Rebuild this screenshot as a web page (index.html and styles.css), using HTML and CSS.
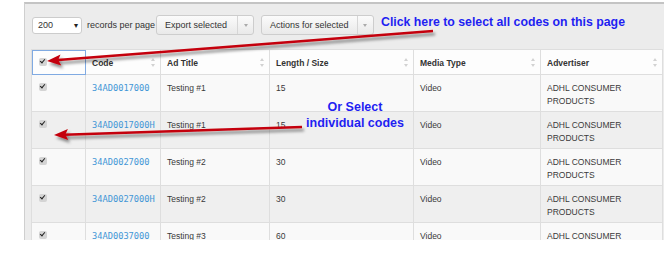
FILE: index.html
```html
<!DOCTYPE html>
<html lang="en">
<head>
  <meta charset="UTF-8">
  <title>Codes</title>
  <link rel="stylesheet" href="styles.css">
</head>
<body>
  <!-- Codes list panel -->
  <div class="panel">
    <div class="toolbar">
      <div class="select">200 <span class="select-caret">&#9662;</span></div>
      <span class="per-page">records per page</span>
      <div class="split-btn export">
        <span class="btn-main">Export selected</span>
        <span class="btn-caret"><i></i></span>
      </div>
      <div class="split-btn actions">
        <span class="btn-main">Actions for selected</span>
        <span class="btn-caret"><i></i></span>
      </div>
    </div>

    <table class="codes">
      <colgroup>
        <col style="width:54px">
        <col style="width:75px">
        <col style="width:109px">
        <col style="width:144px">
        <col style="width:127px">
        <col style="width:122px">
      </colgroup>
      <thead>
        <tr>
          <th class="check-col focused"><span class="check"></span></th>
          <th>Code<span class="sort"></span></th>
          <th>Ad Title<span class="sort"></span></th>
          <th>Length / Size<span class="sort"></span></th>
          <th>Media Type<span class="sort"></span></th>
          <th>Advertiser<span class="sort"></span></th>
        </tr>
      </thead>
      <tbody>
        <tr>
          <td><span class="check"></span></td>
          <td><a class="code" href="#">34AD0017000</a></td>
          <td>Testing #1</td>
          <td>15</td>
          <td>Video</td>
          <td>ADHL CONSUMER<br>PRODUCTS</td>
        </tr>
        <tr>
          <td><span class="check"></span></td>
          <td><a class="code" href="#">34AD0017000H</a></td>
          <td>Testing #1</td>
          <td>15</td>
          <td>Video</td>
          <td>ADHL CONSUMER<br>PRODUCTS</td>
        </tr>
        <tr>
          <td><span class="check"></span></td>
          <td><a class="code" href="#">34AD0027000</a></td>
          <td>Testing #2</td>
          <td>30</td>
          <td>Video</td>
          <td>ADHL CONSUMER<br>PRODUCTS</td>
        </tr>
        <tr>
          <td><span class="check"></span></td>
          <td><a class="code" href="#">34AD0027000H</a></td>
          <td>Testing #2</td>
          <td>30</td>
          <td>Video</td>
          <td>ADHL CONSUMER<br>PRODUCTS</td>
        </tr>
        <tr>
          <td><span class="check"></span></td>
          <td><a class="code" href="#">34AD0037000</a></td>
          <td>Testing #3</td>
          <td>60</td>
          <td>Video</td>
          <td>ADHL CONSUMER</td>
        </tr>
      </tbody>
    </table>
  </div>

  <!-- Annotations drawn over the screenshot -->
  <div class="note note-all">Click here to select all codes on this page</div>
  <div class="note note-single">Or Select<br>individual codes</div>

  <svg class="arrows" width="669" height="255" viewBox="0 0 669 255">
    <defs>
      <filter id="shadow" x="-10%" y="-50%" width="120%" height="300%">
        <feDropShadow dx="2" dy="3" stdDeviation="1.6" flood-color="#000" flood-opacity="0.45"/>
      </filter>
    </defs>
    <g filter="url(#shadow)" fill="#c4000b" stroke="#c4000b">
      <line x1="433" y1="31" x2="58" y2="60" stroke-width="2.6"/>
      <polygon stroke="none" points="47,61 61.3,65.6 58.2,60.1 60.5,54.6"/>
      <line x1="302" y1="127" x2="64" y2="134.7" stroke-width="2.6"/>
      <polygon stroke="none" points="54,135 68.2,140.1 65.4,134.6 67.9,129.1"/>
    </g>
  </svg>
</body>
</html>
```

FILE: styles.css
```css
/* General styles */
body {
  margin: 0;
  background: #fff;
  font-family: "Liberation Sans", Arial, sans-serif;
  font-size: 9px;
  color: #333;
  width: 669px;
  height: 255px;
  overflow: hidden;
  position: relative;
}

/* Grey panel round the list */
.panel {
  margin: 2px 0 0 24px;
  width: 639px;
  height: 236px;
  background: #ececec;
  border-top: 2px solid #c4c4c4;
  border-left: 1px solid #cfcfcf;
  overflow: hidden;
}

/* Toolbar */
.toolbar {
  display: flex;
  align-items: center;
  height: 20px;
  padding: 11px 0 0 7px;
}

.select {
  box-sizing: border-box;
  width: 50px;
  height: 17px;
  background: #fff;
  border: 1px solid #ccc;
  border-radius: 3px;
  display: flex;
  align-items: center;
  justify-content: space-between;
  padding: 0 3px 0 5px;
  color: #333;
}

.select-caret {
  font-size: 8px;
  color: #222;
}

.per-page {
  margin: 0 1px 0 5px;
  color: #333;
}

.split-btn {
  display: flex;
  height: 20px;
  box-sizing: border-box;
  border: 1px solid #cdcdcd;
  border-radius: 3px;
  background: linear-gradient(#fbfbfb, #e9e9e9);
  color: #333;
}

.split-btn.actions {
  margin-left: 7px;
}

.btn-main {
  display: flex;
  align-items: center;
  padding: 0 8px;
  border-right: 1px solid #d6d6d6;
}

.btn-caret {
  width: 15px;
  display: flex;
  align-items: center;
  justify-content: center;
}

.btn-caret i {
  border-left: 2.5px solid transparent;
  border-right: 2.5px solid transparent;
  border-top: 3px solid #aaa;
}

.export .btn-main {
  width: 63px;
  padding-right: 9px;
}

/* Codes table */
.codes {
  margin: 14px 0 0 6px;
  width: 631px;
  table-layout: fixed;
  border-collapse: collapse;
  background: #f9f9f9;
  font-size: 8.5px;
}

.codes th,
.codes td {
  border: 1px solid #dedede;
  padding: 0 6px;
  text-align: left;
  vertical-align: top;
  line-height: 12.5px;
}

.codes th {
  background: #fdfdfd;
  font-weight: bold;
  color: #333;
  height: 25px;
  padding-top: 7px;
  box-sizing: border-box;
  position: relative;
}

.codes th.focused {
  outline: 1px solid #80aae2;
  outline-offset: -1px;
}

.codes td {
  height: 37px;
  box-sizing: border-box;
  padding-top: 7px;
  color: #3a3a3a;
}

.codes tbody tr:nth-child(even) td {
  background: #efefef;
}

.code {
  font-family: "DejaVu Sans Mono", monospace;
  font-size: 8.7px;
  color: #4296d6;
  text-decoration: none;
}

/* Small grey checkbox */
.check {
  display: inline-block;
  width: 8px;
  height: 8px;
  margin: 1px 0 0 1px;
  background: #d4d4d4;
  border-radius: 2px;
  position: relative;
}

.check::after {
  content: "";
  position: absolute;
  left: 2px;
  top: 0px;
  width: 2px;
  height: 4px;
  border-right: 1.5px solid #222;
  border-bottom: 1.5px solid #222;
  transform: rotate(40deg);
}

/* Sort arrows in header */
.sort {
  position: absolute;
  right: 4px;
  top: 8px;
  width: 5px;
  height: 9px;
}

.sort::before,
.sort::after {
  content: "";
  position: absolute;
  left: 0;
  border-left: 2.5px solid transparent;
  border-right: 2.5px solid transparent;
}

.sort::before {
  top: 0;
  border-bottom: 3.5px solid #d2d2d2;
}

.sort::after {
  bottom: 0;
  border-top: 3.5px solid #d2d2d2;
}

/* Annotations */
.note {
  position: absolute;
  font-weight: bold;
  font-size: 12.3px;
  color: #1f1ff2;
  line-height: 15px;
}

.note-all {
  left: 381px;
  top: 15px;
  white-space: nowrap;
}

.note-single {
  left: 300px;
  top: 99px;
  width: 110px;
  text-align: center;
  font-size: 12.5px;
  line-height: 16px;
}

.arrows {
  position: absolute;
  left: 0;
  top: 0;
  pointer-events: none;
}
```
